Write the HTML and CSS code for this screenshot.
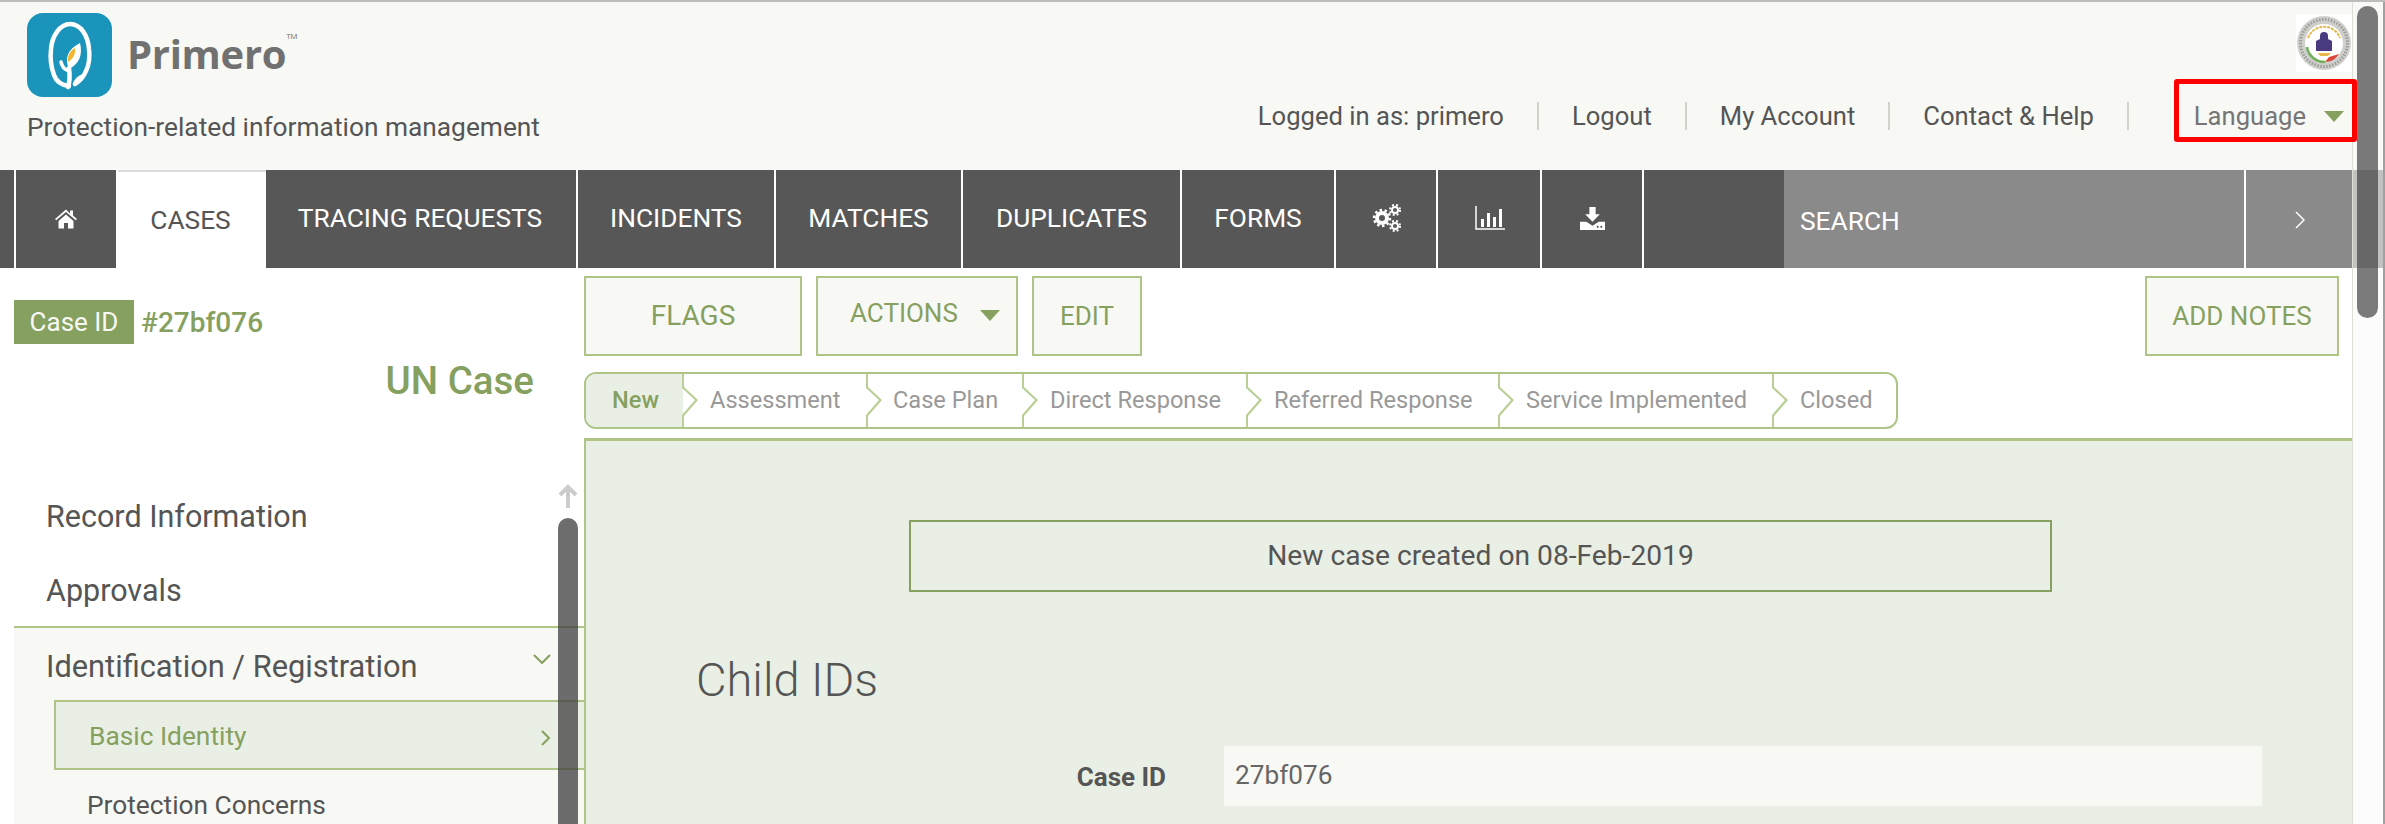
FILE: index.html
```html
<!DOCTYPE html>
<html lang="en">
<head>
<meta charset="utf-8">
<title>Primero</title>
<link rel="stylesheet" href="styles.css">
</head>
<body>
<div class="page">
  <header class="header">
    <div class="brand">
      <div class="logo-row">
        <svg class="logo" viewBox="0 0 85 84" aria-hidden="true">
          <rect width="85" height="84" rx="16" fill="#1a94ba"/>
          <path d="M42 73c-8-1-13-5-15-11-3-8-4-17-3-26 1-13 9-25 19-25 11 0 18 12 19 25 1 9 0 16-3 22-2 5-6 10-11 13 1-3 3-5 6-7" fill="none" stroke="#fff" stroke-width="4.500" stroke-linecap="round" stroke-linejoin="round"/>
          <path d="M41 74c2-6 2-12 1-19" fill="none" stroke="#fff" stroke-width="4.500" stroke-linecap="round"/>
          <path d="M42 56c-5-11-1-20 11-26 3 12-1 21-11 26z" fill="#fff"/>
          <path d="M41 49c-1-6 2-11 7-14 1 6-2 11-7 14z" fill="#f2b632"/>
          <path d="M40 57c-3-1-5-4-6-8" fill="none" stroke="#fff" stroke-width="3.500" stroke-linecap="round"/>
        </svg>
        <span class="wordmark">Primero<sup class="tm">TM</sup></span>
      </div>
      <div class="tagline">Protection-related information management</div>
    </div>
    <div class="account">
      <svg class="seal" viewBox="0 0 56 58" aria-hidden="true">
        <rect width="56" height="58" fill="#fff"/>
        <circle cx="28" cy="29" r="27" fill="#cfcfcc"/>
        <circle cx="28" cy="29" r="23.500" fill="none" stroke="#9c9c98" stroke-width="3" stroke-dasharray="1.500 1.500"/>
        <circle cx="28" cy="29" r="19" fill="#fff"/>
        <path d="M12 24a17 17 0 0 1 32 0" fill="none" stroke="#e6b84c" stroke-width="2" stroke-dasharray="3 1"/>
        <path d="M11 33c1 8 8 15 18 15" fill="none" stroke="#6faf5a" stroke-width="2.500"/>
        <path d="M29 48c6 0 11-3 14-8l-10 3z" fill="#d9483b"/>
        <path d="M20 37V27l4-2v-3a4 4 0 0 1 8 0v3l4 2v10z" fill="#4a3a80"/>
        <path d="M22 39h13l-3 3h-8z" fill="#e6b84c"/>
      </svg>
      <nav class="links">
        <span class="link">Logged in as: primero</span>
        <a class="link">Logout</a>
        <a class="link">My Account</a>
        <a class="link">Contact &amp; Help</a>
        <div class="language"><span>Language</span><i class="tri"></i></div>
      </nav>
    </div>
  </header>

  <nav class="mainnav">
    <div class="tab stub"></div>
    <a class="tab home"><svg class="ico" viewBox="0 0 24 20"><path d="M12 1 1 10.500l1.200 1.300L12 3.500l9.800 8.300 1.200-1.300-4-3.400V2h-3v2.900zM4.500 12.500V20h5.500v-5.500h4V20h5.500v-7.500L12 6z" fill="#fff"/></svg></a>
    <a class="tab active">CASES</a>
    <a class="tab tracing">TRACING REQUESTS</a>
    <a class="tab incidents">INCIDENTS</a>
    <a class="tab matches">MATCHES</a>
    <a class="tab duplicates">DUPLICATES</a>
    <a class="tab forms">FORMS</a>
    <a class="tab icon-tab gears"><svg class="ico-l" viewBox="0 0 30 28"><g fill="none" stroke="#fff"><circle cx="10" cy="14" r="5" stroke-width="4"/><circle cx="10" cy="14" r="8" stroke-width="2.500" stroke-dasharray="2.500 2.500"/><circle cx="23" cy="6" r="3" stroke-width="2"/><circle cx="23" cy="6" r="5" stroke-width="2" stroke-dasharray="2 2"/><circle cx="23" cy="22" r="3" stroke-width="2"/><circle cx="23" cy="22" r="5" stroke-width="2" stroke-dasharray="2 2"/></g></svg></a>
    <a class="tab icon-tab chart"><svg class="ico-l" viewBox="0 0 30 24"><path d="M1 0v23h29" fill="none" stroke="#fff" stroke-width="1.500"/><path d="M6 13h3v8H6zM12 7h3v14h-3zM18 11h3v10h-3zM24 3h3v18h-3z" fill="#fff"/></svg></a>
    <a class="tab icon-tab dl"><svg class="ico-m" viewBox="0 0 24 22"><path d="M9 0h6v7h4l-7 7-7-7h4z" fill="#fff"/><path d="M0 14h6l6 4 6-4h6v8H0z" fill="#fff"/><circle cx="17" cy="19" r="1" fill="#575757"/><circle cx="20.500" cy="19" r="1" fill="#575757"/></svg></a>
    <div class="tab spacer"></div>
    <div class="search"><span class="search-label">SEARCH</span></div>
    <a class="search-go"><svg class="go" viewBox="0 0 10 18"><path d="m1 1 8 8-8 8" fill="none" stroke="#fff" stroke-width="1.500"/></svg></a>
  </nav>

  <main class="body">
    <aside class="side">
      <div class="case-id"><span class="case-tag">Case ID</span><span class="case-num">#27bf076</span></div>
      <h2 class="case-type">UN Case</h2>
      <ul class="menu">
        <li class="menu-top first">Record Information</li>
        <li class="menu-top">Approvals</li>
      </ul>
      <div class="group">
        <div class="group-head"><span>Identification / Registration</span>
          <svg class="chev-d" viewBox="0 0 18 10"><path d="m1 1 8 8 8-8" fill="none" stroke="#86a05f" stroke-width="2"/></svg>
        </div>
        <div class="sub current"><span>Basic Identity</span>
          <svg class="chev-r" viewBox="0 0 10 16"><path d="m1 1 7 7-7 7" fill="none" stroke="#86a05f" stroke-width="2"/></svg>
        </div>
        <div class="sub">Protection Concerns</div>
      </div>
      <svg class="side-up" viewBox="0 0 20 24"><path d="M10 24V3M2 11l8-8 8 8" fill="none" stroke="#ccc" stroke-width="4"/></svg>
      <div class="side-thumb"></div>
    </aside>

    <section class="content">
      <div class="toolbar">
        <a class="btn flags">FLAGS</a>
        <a class="btn actions">ACTIONS<i class="tri tri-l"></i></a>
        <a class="btn edit">EDIT</a>
        <a class="btn notes">ADD NOTES</a>
      </div>
      <ol class="steps">
        <li class="step now s-new">New</li>
        <li class="step s-a">Assessment</li>
        <li class="step s-b">Case Plan</li>
        <li class="step s-c">Direct Response</li>
        <li class="step s-d">Referred Response</li>
        <li class="step s-e">Service Implemented</li>
        <li class="step s-f">Closed</li>
      </ol>
      <div class="panel">
        <div class="notice">New case created on 08-Feb-2019</div>
        <h1 class="section-title">Child IDs</h1>
        <div class="field">
          <label class="field-label">Case ID</label>
          <div class="field-value">27bf076</div>
        </div>
      </div>
    </section>
  </main>

  <div class="page-scroll"><div class="page-thumb"></div></div>
  <div class="red-box"></div>
</div>
</body>
</html>
```
FILE: styles.css
```css
* { box-sizing: border-box; }
html, body { margin: 0; height: 100%; overflow: hidden; background: #fff; }
body { font-family: Roboto, "Liberation Sans", sans-serif; color: #555; }
a { color: inherit; text-decoration: none; }
ul, ol { list-style: none; margin: 0; padding: 0; }
h1, h2 { margin: 0; }

.page { position: relative; width: 2385px; height: 824px; overflow: hidden; }

/* header */
.header { height: 170px; background: #f8f9f5; border-top: 2px solid #bdbdbd; display: flex; justify-content: space-between; padding: 11px 33px 0 27px; }
.logo-row { display: flex; align-items: center; gap: 15px; height: 84px; }
.logo { width: 85px; height: 84px; display: block; }
.wordmark { font-family: "Open Sans", sans-serif; font-weight: 700; font-size: 40px; line-height: 1; color: #717171; letter-spacing: -.3px; position: relative; top: -1px; }
.tm { font-size: 8px; font-weight: 400; vertical-align: top; position: relative; top: -2px; }
.tagline { font-size: 26.300px; line-height: 30px; margin-top: 15px; color: #555; }
.account { display: flex; flex-direction: column; align-items: flex-end; }
.seal { width: 56px; height: 58px; display: block; margin-top: 1px; }
.links { display: flex; align-items: center; height: 30px; margin-top: 29px; font-size: 25.600px; color: #555; }
.link { padding: 0 33px; border-right: 2px solid #d3d3cd; line-height: 28px; }
.language { display: flex; align-items: center; padding-left: 65px; padding-right: 8px; color: #757575; }
.tri { display: block; width: 0; height: 0; border-left: 10px solid transparent; border-right: 10px solid transparent; border-top: 11px solid #86a05f; margin-left: 18px; }

/* main nav */
.mainnav { display: flex; height: 98px; background: #fff; gap: 2px; }
.tab { display: flex; align-items: center; justify-content: center; flex: none; background: #575757; color: #fff; font-size: 26.300px; padding-bottom: 2px; }
.stub { width: 14px; }
.home { width: 100px; }
.active { width: 148px; background: #fff; color: #555; border-top: 2px solid #dcdcdc; padding: 0 3px 0 0; }
.tracing { width: 310px; margin-left: -2px; padding-right: 2px; }
.incidents { width: 196px; }
.matches { width: 185px; }
.duplicates { width: 217px; }
.forms { width: 152px; }
.icon-tab { width: 100px; }
.gears { padding-left: 2px; }
.chart { width: 102px; padding-left: 2px; }
.dl { width: 100px; }
.spacer { width: 140px; margin-right: -2px; }
.ico { width: 24px; height: 21px; }
.ico-l { width: 30px; height: 28px; }
.ico-m { width: 25px; height: 23px; }
.search { width: 460px; flex: none; background: #8a8a8a; color: #fff; font-size: 26.300px; display: flex; align-items: center; padding: 3px 0 0 16px; }
.search-go { flex: 1; background: #8a8a8a; display: flex; align-items: center; padding-left: 49px; }
.go { width: 10px; height: 18px; margin-top: 1px; }

/* body */
.body { display: flex; height: 556px; }
.side { width: 584px; position: relative; padding-left: 14px; flex: none; }
.case-id { display: flex; align-items: center; padding-top: 32px; height: 76px; }
.case-tag { background: #86a05f; color: #f8f9f5; font-size: 26px; width: 120px; height: 44px; display: flex; align-items: center; justify-content: center; }
.case-num { color: #86a05f; font-size: 28px; font-weight: 500; margin-left: 7px; }
.case-type { color: #86a05f; font-size: 38.500px; font-weight: 500; text-align: right; line-height: 44px; padding-right: 50px; margin-top: 15px; }
.menu { margin-top: 94px; }
.menu-top { font-size: 30.500px; color: #555; line-height: 40px; padding-left: 32px; margin-bottom: 34px; }
.group { background: #f8f9f5; border-top: 2px solid #afc587; margin-top: -19px; height: 200px; }
.group-head { height: 72px; display: flex; justify-content: space-between; align-items: center; padding: 4px 33px 0 32px; font-size: 30.800px; }
.chev-d { width: 18px; height: 10px; margin-top: -15px; }
.sub { margin-left: 40px; padding-left: 33px; font-size: 26.300px; height: 70px; display: flex; align-items: center; }
.current { border: 2px solid #afc587; border-right: 0; background: #e9efe4; color: #86a05f; justify-content: space-between; padding: 2px 33px 0 33px; }
.chev-r { width: 10px; height: 16px; margin-top: 4px; }
.side-up { position: absolute; left: 558px; top: 216px; width: 20px; height: 24px; }
.side-thumb { position: absolute; left: 558px; top: 250px; bottom: -20px; width: 20px; border-radius: 10px; background: rgba(60, 60, 60, .75); }

/* content */
.content { width: 1769px; flex: none; }
.toolbar { display: flex; gap: 14px; padding-top: 8px; height: 104px; align-items: flex-start; }
.btn { height: 80px; border: 2.500px solid #afc587; background: #f8f9f5; color: #86a05f; font-size: 26px; display: flex; align-items: center; justify-content: center; }
.flags { width: 218px; font-size: 28px; padding-bottom: 2px; }
.actions { width: 202px; padding: 0 0 6px 32px; justify-content: flex-start; }
.tri-l { margin-left: 22px; margin-top: 4px; }
.edit { width: 110px; }
.notes { width: 194px; margin-left: auto; margin-right: 14px; }

.steps { display: flex; width: 1314px; height: 57px; border: 2.500px solid #afc587; border-radius: 12px; overflow: hidden; background: #fff; }
.step { position: relative; display: flex; align-items: center; padding: 0 0 1px 27px; color: #999; font-size: 23.600px; flex: none; }
.step:not(:last-child)::after { content: ""; position: absolute; right: -15px; top: 0; bottom: 0; width: 16px; z-index: 1; background: #b9cf95; clip-path: polygon(0 0, 2px 0, 2px 13px, 16px 26px, 2px 42px, 2px 100%, 0 100%, 0 41px, 13px 26px, 0 14px); }
.now { background: #e9efe4; color: #86a05f; font-weight: 500; padding-left: 26px; }
.s-new { width: 97px; }
.s-a { width: 184px; }
.s-b { width: 156px; padding-left: 26px; }
.s-c { width: 224px; }
.s-d { width: 252px; }
.s-e { width: 274px; }
.s-f { flex: 1; }

.panel { margin-top: 9px; width: 1769px; height: 400px; background: #e9efe4; border-top: 3px solid #afc587; border-left: 2.500px solid #afc587; padding-top: 79px; }
.notice { margin-left: 323px; width: 1143px; height: 72px; border: 2.500px solid #86a05f; display: flex; align-items: center; justify-content: center; font-size: 28.200px; color: #555; padding-bottom: 2px; }
.section-title { font-weight: 300; font-size: 47px; line-height: 60px; color: #555; margin: 58px 0 0 110px; }
.field { display: flex; align-items: center; margin-top: 36px; }
.field-label { width: 580px; font-size: 26px; font-weight: 700; color: #555; text-align: right; margin-top: 2px; }
.field-value { margin-left: 58px; width: 1038px; height: 60px; background: #f8f9f5; padding-left: 11px; font-size: 26.200px; color: #666; line-height: 58px; }

/* overlays */
.page-scroll { position: absolute; top: 2px; right: 0; bottom: 0; width: 33px; border-left: 1px solid #dcdfd6; border-right: 2px solid #a0a0a0; background: rgba(250, 250, 250, .5); }
.page-thumb { position: absolute; left: 4px; top: 4px; width: 21px; height: 312px; border-radius: 11px; background: rgba(60, 60, 60, .68); }
.red-box { position: absolute; left: 2174px; top: 79px; width: 183px; height: 63px; border: 5px solid #f00; border-radius: 3px; }
```
